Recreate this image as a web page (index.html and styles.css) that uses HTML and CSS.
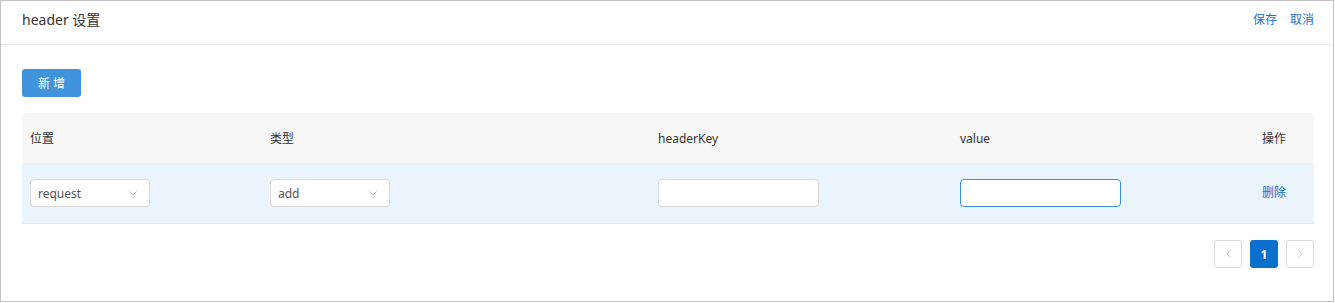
FILE: index.html
```html
<!DOCTYPE html>
<html lang="zh-CN">
<head>
<meta charset="utf-8">
<title>header 设置</title>
<link rel="stylesheet" href="styles.css">
</head>
<body>
<div class="panel">
  <div class="panel-header">
    <div class="title">header 设置</div>
    <div class="actions">
      <a class="link">保存</a>
      <a class="link">取消</a>
    </div>
  </div>
  <div class="panel-body">
    <button class="btn-primary">新 增</button>
    <div class="table">
      <div class="thead">
        <div class="cell">位置</div>
        <div class="cell">类型</div>
        <div class="cell">headerKey</div>
        <div class="cell">value</div>
        <div class="cell">操作</div>
      </div>
      <div class="trow">
        <div class="cell">
          <div class="select"><span>request</span>
            <svg class="chev" width="8" height="5" viewBox="0 0 8 5"><path d="M0.5 0.5 L4 4 L7.5 0.5" fill="none" stroke="#b8b8b8" stroke-width="1"/></svg>
          </div>
        </div>
        <div class="cell">
          <div class="select"><span>add</span>
            <svg class="chev" width="8" height="5" viewBox="0 0 8 5"><path d="M0.5 0.5 L4 4 L7.5 0.5" fill="none" stroke="#b8b8b8" stroke-width="1"/></svg>
          </div>
        </div>
        <div class="cell"><div class="input"></div></div>
        <div class="cell"><div class="input focused"></div></div>
        <div class="cell"><a class="link">删除</a></div>
      </div>
    </div>
    <div class="pager">
      <div class="page-btn">
        <svg width="5" height="8" viewBox="0 0 5 8"><path d="M4.5 0.5 L1 4 L4.5 7.5" fill="none" stroke="#c8c8c8" stroke-width="1"/></svg>
      </div>
      <div class="page-btn active">1</div>
      <div class="page-btn">
        <svg width="5" height="8" viewBox="0 0 5 8"><path d="M0.5 0.5 L4 4 L0.5 7.5" fill="none" stroke="#c8c8c8" stroke-width="1"/></svg>
      </div>
    </div>
  </div>
</div>
</body>
</html>
```

FILE: styles.css
```css
* { box-sizing: border-box; }
body {
  margin: 0;
  font-family: "Noto Sans", "Noto Sans CJK SC", sans-serif;
  color: #333;
  background: #fff;
}
.panel {
  width: 1334px;
  height: 302px;
  border: 1px solid #c4c4c4;
}
.panel-header {
  height: 44px;
  border-bottom: 1px solid #e6e6e6;
  display: flex;
  justify-content: space-between;
  align-items: flex-start;
  padding: 9px 19px 0 21px;
}
.title {
  font-size: 14px;
  line-height: 20px;
  color: #333;
}
.actions {
  display: flex;
  gap: 13px;
}
.link {
  font-size: 12px;
  line-height: 20px;
  color: #1d6fc8;
  cursor: pointer;
}
.panel-body {
  padding: 24px 19px 0 21px;
}
.btn-primary {
  display: block;
  width: 59px;
  height: 28px;
  border: none;
  border-radius: 3px;
  background: #3f94dc;
  color: #fff;
  font-family: "Noto Sans", "Noto Sans CJK SC", sans-serif;
  font-size: 12px;
  padding: 0;
  cursor: pointer;
}
.table {
  margin-top: 16px;
}
.thead, .trow {
  display: grid;
  grid-template-columns: 240px 388px 302px 302px 1fr;
  align-items: center;
}
.thead {
  height: 50px;
  background: #f7f7f7;
  border-radius: 4px 4px 0 0;
  font-size: 12px;
  color: #333;
}
.trow {
  height: 61px;
  background: #ebf3fb;
  border-bottom: 1px solid #e3e6ea;
  font-size: 12px;
}
.cell {
  padding-left: 8px;
  display: flex;
  align-items: center;
}
.select {
  width: 120px;
  height: 28px;
  border: 1px solid #d9d9d9;
  border-radius: 4px;
  background: #fff;
  display: flex;
  align-items: center;
  justify-content: space-between;
  padding: 0 12px 0 7px;
  font-size: 12px;
  color: #555;
}
.chev { display: block; }
.input {
  width: 161px;
  height: 28px;
  border: 1px solid #d9d9d9;
  border-radius: 4px;
  background: #fff;
}
.input.focused {
  border-color: #3d8fdc;
}
.pager {
  margin-top: 16px;
  display: flex;
  justify-content: flex-end;
  gap: 8px;
}
.page-btn {
  width: 28px;
  height: 28px;
  border: 1px solid #dcdcdc;
  border-radius: 3px;
  background: #fff;
  display: flex;
  align-items: center;
  justify-content: center;
  font-size: 12px;
}
.page-btn.active {
  background: #0b6fcd;
  border-color: #0b6fcd;
  color: #fff;
  font-weight: bold;
}
```
